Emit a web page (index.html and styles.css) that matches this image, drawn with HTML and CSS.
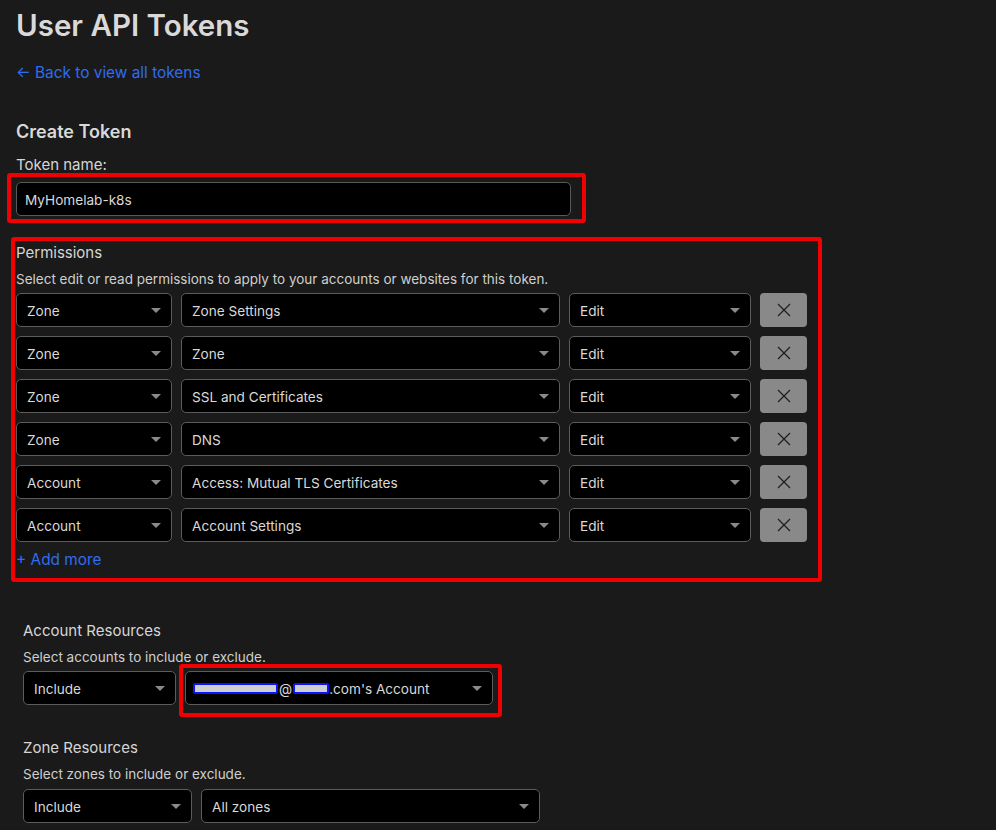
FILE: index.html
```html
<!DOCTYPE html>
<html lang="en">
<head>
<meta charset="utf-8">
<title>User API Tokens</title>
<link rel="stylesheet" href="styles.css">
</head>
<body>
<main class="page">
  <h1 class="title">User API Tokens</h1>
  <a class="link back" href="#">← Back to view all tokens</a>
  <h2 class="section-title">Create Token</h2>
  <label class="label name-label">Token name:</label>
  <div class="mark mark-name">
    <div class="input">MyHomelab-k8s</div>
  </div>

  <section class="mark mark-perms">
    <div class="label">Permissions</div>
    <p class="desc">Select edit or read permissions to apply to your accounts or websites for this token.</p>
    <div class="perm-rows">
      <div class="select"><span>Zone</span><i class="caret"></i></div>
      <div class="select"><span>Zone Settings</span><i class="caret"></i></div>
      <div class="select"><span>Edit</span><i class="caret"></i></div>
      <button class="remove"><svg width="14" height="14" viewBox="0 0 14 14"><path d="M1 1L13 13M13 1L1 13" stroke="#1e1e1e" stroke-width="1.2" fill="none"/></svg></button>

      <div class="select"><span>Zone</span><i class="caret"></i></div>
      <div class="select"><span>Zone</span><i class="caret"></i></div>
      <div class="select"><span>Edit</span><i class="caret"></i></div>
      <button class="remove"><svg width="14" height="14" viewBox="0 0 14 14"><path d="M1 1L13 13M13 1L1 13" stroke="#1e1e1e" stroke-width="1.2" fill="none"/></svg></button>

      <div class="select"><span>Zone</span><i class="caret"></i></div>
      <div class="select"><span>SSL and Certificates</span><i class="caret"></i></div>
      <div class="select"><span>Edit</span><i class="caret"></i></div>
      <button class="remove"><svg width="14" height="14" viewBox="0 0 14 14"><path d="M1 1L13 13M13 1L1 13" stroke="#1e1e1e" stroke-width="1.2" fill="none"/></svg></button>

      <div class="select"><span>Zone</span><i class="caret"></i></div>
      <div class="select"><span>DNS</span><i class="caret"></i></div>
      <div class="select"><span>Edit</span><i class="caret"></i></div>
      <button class="remove"><svg width="14" height="14" viewBox="0 0 14 14"><path d="M1 1L13 13M13 1L1 13" stroke="#1e1e1e" stroke-width="1.2" fill="none"/></svg></button>

      <div class="select"><span>Account</span><i class="caret"></i></div>
      <div class="select"><span>Access: Mutual TLS Certificates</span><i class="caret"></i></div>
      <div class="select"><span>Edit</span><i class="caret"></i></div>
      <button class="remove"><svg width="14" height="14" viewBox="0 0 14 14"><path d="M1 1L13 13M13 1L1 13" stroke="#1e1e1e" stroke-width="1.2" fill="none"/></svg></button>

      <div class="select"><span>Account</span><i class="caret"></i></div>
      <div class="select"><span>Account Settings</span><i class="caret"></i></div>
      <div class="select"><span>Edit</span><i class="caret"></i></div>
      <button class="remove"><svg width="14" height="14" viewBox="0 0 14 14"><path d="M1 1L13 13M13 1L1 13" stroke="#1e1e1e" stroke-width="1.2" fill="none"/></svg></button>
    </div>
    <a class="link add" href="#">+ Add more</a>
  </section>

  <section class="resources">
    <div class="label res-title">Account Resources</div>
    <p class="desc res-desc">Select accounts to include or exclude.</p>
    <div class="res-row account-row">
      <div class="select"><span>Include</span><i class="caret"></i></div>
      <div class="mark mark-account">
        <div class="select"><span class="acct"><span class="redact r1"></span>@<span class="redact r2"></span>.com's Account</span><i class="caret"></i></div>
      </div>
    </div>

    <div class="label res-title zone-title">Zone Resources</div>
    <p class="desc res-desc">Select zones to include or exclude.</p>
    <div class="res-row zone-row">
      <div class="select"><span>Include</span><i class="caret"></i></div>
      <div class="select"><span>All zones</span><i class="caret"></i></div>
    </div>
  </section>
</main>
</body>
</html>
```

FILE: styles.css
```css
* { box-sizing: border-box; }

html, body {
  margin: 0;
  background: #1a1a1a;
  color: #d8d8d8;
  font-family: Inter, "Noto Sans", "Liberation Sans", sans-serif;
}

.page {
  padding: 7px 16px 0 16px;
  display: flex;
  flex-direction: column;
  align-items: flex-start;
}

.title {
  margin: 0;
  font-size: 29.5px;
  line-height: 36px;
  font-weight: 600;
  color: #d9d9d9;
}

.link {
  color: #2f6cf0;
  text-decoration: none;
  font-size: 15.4px;
  line-height: 20px;
}

.back { margin-top: 20px; }

.section-title {
  margin: 38px 0 0;
  font-size: 18px;
  line-height: 22px;
  font-weight: 600;
  color: #d9d9d9;
}

.label {
  font-size: 15px;
  line-height: 18px;
  color: #d6d6d6;
}

.name-label { margin-top: 13px; }

.desc {
  margin: 9px 0 0;
  font-size: 13.5px;
  line-height: 16px;
  color: #cfcfcf;
}

/* red annotation boxes (overlay) */
.mark { position: relative; }
.mark::after {
  content: "";
  position: absolute;
  border: 4px solid #f00000;
  border-radius: 3px;
  pointer-events: none;
}

.mark-name { margin-top: 8px; }
.mark-name::after { top: -9px; left: -9px; right: -15px; bottom: -7px; }

.input {
  width: 555px;
  height: 34px;
  background: #000;
  border: 1px solid #595959;
  border-radius: 5px;
  display: flex;
  align-items: center;
  padding: 1px 0 0 8px;
  font-size: 13.6px;
  color: #d9d9d9;
}

.mark-perms {
  margin-top: 28px;
  display: flex;
  flex-direction: column;
  align-items: flex-start;
}
.mark-perms::after { top: -7px; left: -5px; right: -15px; bottom: -12px; }

.perm-rows {
  margin-top: 6px;
  display: grid;
  grid-template-columns: 156px 379px 182px 47px;
  grid-auto-rows: 34px;
  gap: 9px;
}

.select {
  height: 34px;
  background: #000;
  border: 1px solid #5c5c5c;
  border-radius: 5px;
  display: flex;
  align-items: center;
  justify-content: space-between;
  padding: 1px 10px 0 10px;
  font-size: 13.6px;
  color: #d9d9d9;
  white-space: nowrap;
}

.caret {
  width: 0;
  height: 0;
  border-left: 5px solid transparent;
  border-right: 5px solid transparent;
  border-top: 5px solid #8a8a8a;
}

.remove {
  border: 0;
  padding: 0;
  margin: 0;
  background: #898989;
  border-radius: 4px;
  display: flex;
  align-items: center;
  justify-content: center;
}

.add { margin-top: 8px; }

.resources {
  margin-top: 52px;
  padding-left: 7px;
  display: flex;
  flex-direction: column;
  align-items: flex-start;
}

.res-desc { margin-top: 9px; }

.res-row {
  margin-top: 6px;
  display: grid;
  gap: 9px;
}
.account-row { grid-template-columns: 153px 308px; }
.zone-row { grid-template-columns: 169px 339px; margin-top: 7px; }

.mark-account::after { top: -7px; left: -6px; right: -9px; bottom: -12px; }

.acct {
  display: flex;
  align-items: center;
  margin-left: -3px;
}

.redact {
  display: inline-block;
  height: 11px;
  background: #cfcfcf;
  border: 2px solid #0a14ff;
  border-radius: 2px;
}
.r1 { width: 85px; margin-right: 1px; }
.r2 { width: 36px; margin-left: 1px; }

.zone-title { margin-top: 34px; }
```
